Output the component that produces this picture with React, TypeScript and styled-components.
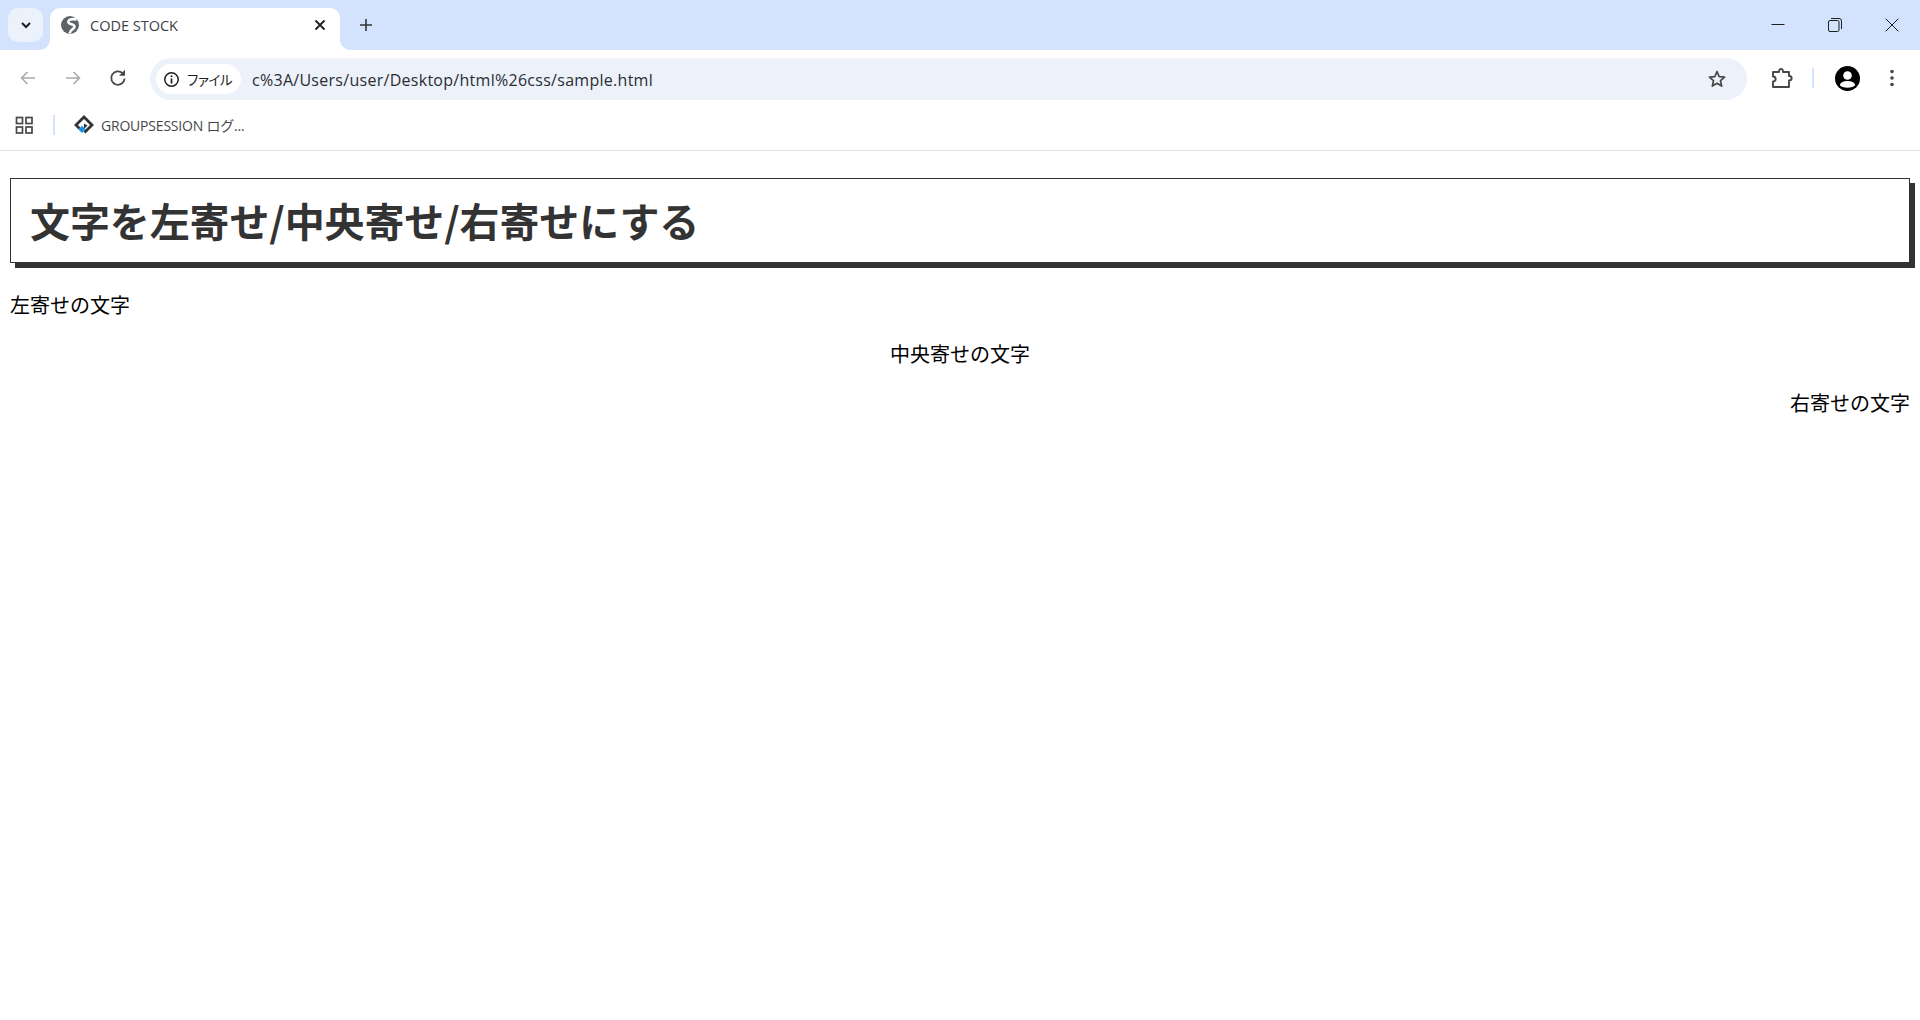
import React from "react";
import styled, { createGlobalStyle } from "styled-components";

const GlobalStyle = createGlobalStyle`
  html, body {
    margin: 0;
    padding: 0;
    background: #fff;
    font-family: "Noto Sans CJK JP", "Noto Sans", sans-serif;
  }
`;

const Browser = styled.div`
  width: 1920px;
  height: 1020px;
  overflow: hidden;
  display: flex;
  flex-direction: column;
`;

const TabStrip = styled.div`
  height: 50px;
  flex: none;
  background: #d3e3fd;
  display: flex;
  align-items: flex-start;
  padding-left: 8px;
`;

const TabSearch = styled.div`
  width: 35px;
  height: 34px;
  margin-top: 8px;
  border-radius: 10px;
  background: #ecf2fc;
  display: flex;
  align-items: center;
  justify-content: center;
`;

const Tab = styled.div`
  position: relative;
  width: 290px;
  height: 42px;
  margin: 8px 0 0 7px;
  padding: 0 13px 8px 11px;
  box-sizing: border-box;
  background: #fff;
  border-radius: 10px 10px 0 0;
  display: flex;
  align-items: center;
  gap: 11px;

  &::before,
  &::after {
    content: "";
    position: absolute;
    bottom: 0;
    width: 10px;
    height: 10px;
  }
  &::before {
    left: -10px;
    background: radial-gradient(circle at 0 0, transparent 9.5px, #fff 10px);
  }
  &::after {
    right: -10px;
    background: radial-gradient(circle at 100% 0, transparent 9.5px, #fff 10px);
  }
`;

const TabTitle = styled.span`
  flex: 1;
  font-family: "Open Sans", "Noto Sans", sans-serif;
  font-size: 14.5px;
  color: #3c4043;
`;

const NewTab = styled.div`
  width: 28px;
  height: 28px;
  margin: 11px 0 0 12px;
  display: flex;
  align-items: center;
  justify-content: center;
`;

const WindowControls = styled.div`
  margin-left: auto;
  display: flex;
`;

const WindowButton = styled.div`
  width: 57px;
  height: 49px;
  display: flex;
  align-items: center;
  justify-content: center;
`;

const Toolbar = styled.div`
  height: 54px;
  flex: none;
  background: #fff;
  border-radius: 10px 10px 0 0;
  padding: 8px 0 0 10px;
  box-sizing: border-box;
  display: flex;
  align-items: flex-start;
`;

const NavButton = styled.div`
  width: 36px;
  height: 40px;
  margin-right: 9px;
  display: flex;
  align-items: center;
  justify-content: center;
`;

const Omnibox = styled.div`
  width: 1597px;
  height: 42px;
  margin-left: 5px;
  box-sizing: border-box;
  padding: 0 20px 0 6px;
  border-radius: 21px;
  background: #ecf1fa;
  display: flex;
  align-items: center;
`;

const FileChip = styled.div`
  width: 85px;
  height: 30px;
  box-sizing: border-box;
  padding-left: 7px;
  border-radius: 15px;
  background: #fff;
  display: flex;
  align-items: center;
  gap: 7px;
  font-size: 13.5px;
  font-weight: 400;
  font-feature-settings: "palt";
  letter-spacing: -0.4px;
  color: #1f1f1f;
`;

const Url = styled.span`
  flex: 1;
  margin-left: 11px;
  padding-top: 1px;
  font-family: "Open Sans", "Noto Sans", sans-serif;
  font-size: 16px;
  letter-spacing: 0.28px;
  color: #2b2d31;
`;

const ToolbarIcons = styled.div`
  display: flex;
  align-items: center;
  height: 40px;
`;

const ToolbarSlot = styled.div<{ $left: number }>`
  margin-left: ${(p) => p.$left}px;
  display: flex;
  align-items: center;
`;

const Divider = styled.div<{ $left: number }>`
  width: 2px;
  height: 20px;
  margin-left: ${(p) => p.$left}px;
  background: #d3e3fd;
`;

const BookmarkBar = styled.div`
  height: 47px;
  flex: none;
  box-sizing: border-box;
  border-bottom: 1px solid #dfe1e5;
  padding: 0 0 4px 15px;
  display: flex;
  align-items: center;
`;

const Bookmark = styled.div`
  display: flex;
  align-items: center;
  gap: 7px;
  margin-left: 19px;
  font-family: "Open Sans", "Noto Sans CJK JP", sans-serif;
  font-size: 14px;
  letter-spacing: -0.2px;
  color: #474747;
`;

const Page = styled.main`
  flex: 1;
  background: #fff;
  padding: 27px 10px 0;
  font-size: 20px;
  color: #000;
`;

const Heading = styled.h1`
  margin: 0 0 27px;
  height: 85px;
  box-sizing: border-box;
  padding: 0 19px 2px;
  display: flex;
  align-items: center;
  border: 1px solid #333;
  box-shadow: 5px 5px 0 #333;
  color: #333;
  font-size: 40px;
  font-weight: 700;
  letter-spacing: -0.12px;
`;

const Line = styled.p<{ $align: "left" | "center" | "right" }>`
  margin: 0 0 19px;
  height: 30px;
  line-height: 30px;
  text-align: ${(p) => p.$align};
`;

const Globe = () => (
  <svg width="18" height="18" viewBox="0 0 18 18">
    <circle cx="9" cy="9" r="9" fill="#5f6368" />
    <path d="M15.5 3.5 C11 2.5 6.5 3.5 7.5 6.5 C8.5 9 13 7.5 13.5 10.5 C13.8 13 9.5 13 8.5 17.5" fill="none" stroke="#fff" strokeWidth="2.6" />
  </svg>
);

const Logo = () => (
  <svg width="20" height="20" viewBox="0 0 20 20">
    <path d="M5.5 13.5 L2 10 L10 2 L18 10 L10.5 17.5" fill="none" stroke="#2f343b" strokeWidth="2.8" />
    <path d="M10 8.5 L13.5 10.5 L10 14 Z" fill="#2f343b" />
    <path d="M8 10.8 L11.6 14.4 L8 18 L4.4 14.4 Z" fill="#1a8fe3" />
  </svg>
);

export default function App() {
  return (
    <Browser>
      <GlobalStyle />
      <TabStrip>
        <TabSearch>
          <svg width="14" height="14" viewBox="0 0 14 14">
            <path d="M3 5 L7 9 L11 5" fill="none" stroke="#1f1f1f" strokeWidth="2" />
          </svg>
        </TabSearch>
        <Tab>
          <Globe />
          <TabTitle>CODE STOCK</TabTitle>
          <svg width="14" height="14" viewBox="0 0 14 14">
            <path d="M2.5 2.5 L11.5 11.5 M11.5 2.5 L2.5 11.5" stroke="#1f1f1f" strokeWidth="1.8" />
          </svg>
        </Tab>
        <NewTab>
          <svg width="14" height="14" viewBox="0 0 14 14">
            <path d="M7 1 V13 M1 7 H13" stroke="#333" strokeWidth="1.6" />
          </svg>
        </NewTab>
        <WindowControls>
          <WindowButton>
            <svg width="14" height="14" viewBox="0 0 14 14">
              <path d="M0.5 6.5 H13.5" stroke="#1f1f1f" strokeWidth="1" />
            </svg>
          </WindowButton>
          <WindowButton>
            <svg width="14" height="14" viewBox="0 0 14 14" fill="none" stroke="#1f1f1f">
              <rect x="0.5" y="2.5" width="10.5" height="11" rx="1.5" />
              <path d="M3 0.5 H11 Q13.5 0.5 13.5 3 V11" />
            </svg>
          </WindowButton>
          <WindowButton>
            <svg width="14" height="14" viewBox="0 0 14 14">
              <path d="M0.7 0.7 L13.3 13.3 M13.3 0.7 L0.7 13.3" stroke="#1f1f1f" strokeWidth="1" />
            </svg>
          </WindowButton>
        </WindowControls>
      </TabStrip>
      <Toolbar>
        <NavButton>
          <svg width="18" height="18" viewBox="0 0 18 18" fill="none" stroke="#a9abad" strokeWidth="1.6">
            <path d="M16 9 H2.5 M8.5 3 L2.5 9 L8.5 15" />
          </svg>
        </NavButton>
        <NavButton>
          <svg width="18" height="18" viewBox="0 0 18 18" fill="none" stroke="#a9abad" strokeWidth="1.6">
            <path d="M2 9 H15.5 M9.5 3 L15.5 9 L9.5 15" />
          </svg>
        </NavButton>
        <NavButton>
          <svg width="18" height="18" viewBox="0 0 18 18" fill="none">
            <path d="M15.6 9.5 A6.7 6.7 0 1 1 13.6 4.3" stroke="#474747" strokeWidth="1.8" />
            <path d="M16 0.8 V6.8 H10 Z" fill="#474747" />
          </svg>
        </NavButton>
        <Omnibox>
          <FileChip>
            <svg width="17" height="17" viewBox="0 0 17 17" fill="none">
              <circle cx="8.5" cy="8.5" r="6.7" stroke="#1f1f1f" strokeWidth="1.5" />
              <path d="M8.5 7.5 V12.5" stroke="#1f1f1f" strokeWidth="1.7" />
              <circle cx="8.5" cy="5.2" r="1" fill="#1f1f1f" />
            </svg>
            ファイル
          </FileChip>
          <Url>c%3A/Users/user/Desktop/html%26css/sample.html</Url>
          <svg width="20" height="20" viewBox="0 0 20 20">
            <path d="M10 2.5 L12.2 7.6 L17.6 8.1 L13.5 11.7 L14.7 17.1 L10 14.3 L5.3 17.1 L6.5 11.7 L2.4 8.1 L7.8 7.6 Z" fill="none" stroke="#474747" strokeWidth="1.7" strokeLinejoin="round" />
          </svg>
        </Omnibox>
        <ToolbarIcons>
          <ToolbarSlot $left={24}>
            <svg width="22" height="22" viewBox="0 0 22 22">
              <path d="M2 5 H8 C8 0.8 12 0.8 12 5 H18 V9 C21.5 9 21.5 13.5 18 13.5 V20 H2 V14.5 C5.5 14.5 5.5 9.5 2 9.5 Z" fill="none" stroke="#474747" strokeWidth="1.9" strokeLinejoin="round" />
            </svg>
          </ToolbarSlot>
          <Divider $left={19} />
          <ToolbarSlot $left={21}>
            <svg width="25" height="25" viewBox="0 0 25 25">
              <circle cx="12.5" cy="12.5" r="12.5" fill="#000" />
              <circle cx="12.5" cy="9.5" r="4.3" fill="#fff" />
              <path d="M4.8 19 C6 13.5 19 13.5 20.2 19 C18 22.5 7 22.5 4.8 19 Z" fill="#fff" />
            </svg>
          </ToolbarSlot>
          <ToolbarSlot $left={30}>
            <svg width="4" height="18" viewBox="0 0 4 18">
              <circle cx="2" cy="2.5" r="1.8" fill="#474747" />
              <circle cx="2" cy="9" r="1.8" fill="#474747" />
              <circle cx="2" cy="15.5" r="1.8" fill="#474747" />
            </svg>
          </ToolbarSlot>
        </ToolbarIcons>
      </Toolbar>
      <BookmarkBar>
        <svg width="19" height="19" viewBox="0 0 19 19" fill="none" stroke="#474747" strokeWidth="1.7">
          <rect x="1.5" y="1.5" width="6" height="6" />
          <rect x="11" y="1.5" width="6" height="6" />
          <rect x="1.5" y="11" width="6" height="6" />
          <rect x="11" y="11" width="6" height="6" />
        </svg>
        <Divider $left={19} />
        <Bookmark>
          <Logo />
          GROUPSESSION ログ...
        </Bookmark>
      </BookmarkBar>
      <Page>
        <Heading>文字を左寄せ/中央寄せ/右寄せにする</Heading>
        <Line $align="left">左寄せの文字</Line>
        <Line $align="center">中央寄せの文字</Line>
        <Line $align="right">右寄せの文字</Line>
      </Page>
    </Browser>
  );
}
